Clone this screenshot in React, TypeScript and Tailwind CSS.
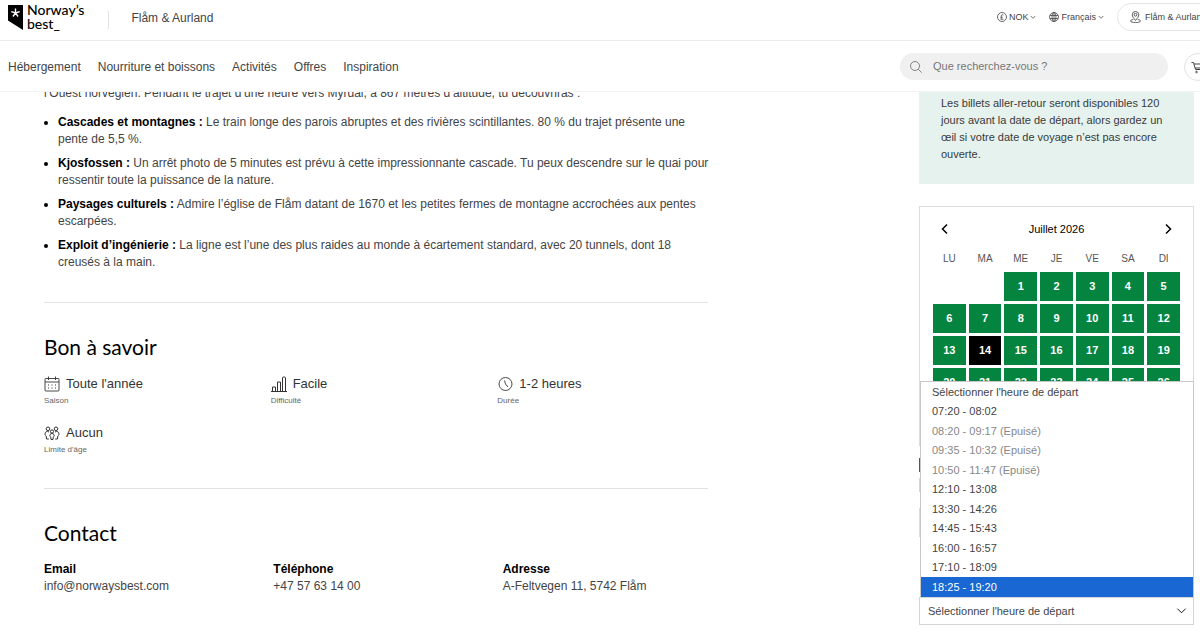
import { useState } from "react";
import type { ReactNode } from "react";

const navLinks = ["Hébergement", "Nourriture et boissons", "Activités", "Offres", "Inspiration"];

const highlights = [
  {
    title: "Cascades et montagnes :",
    text: "Le train longe des parois abruptes et des rivières scintillantes. 80 % du trajet présente une pente de 5,5 %.",
  },
  {
    title: "Kjosfossen :",
    text: "Un arrêt photo de 5 minutes est prévu à cette impressionnante cascade. Tu peux descendre sur le quai pour ressentir toute la puissance de la nature.",
  },
  {
    title: "Paysages culturels :",
    text: "Admire l’église de Flåm datant de 1670 et les petites fermes de montagne accrochées aux pentes escarpées.",
  },
  {
    title: "Exploit d’ingénierie :",
    text: "La ligne est l’une des plus raides au monde à écartement standard, avec 20 tunnels, dont 18 creusés à la main.",
  },
];

const weekdays = ["LU", "MA", "ME", "JE", "VE", "SA", "DI"];

const placeholder = "Sélectionner l'heure de départ";

const departures = [
  { time: "07:20 - 08:02" },
  { time: "08:20 - 09:17", soldOut: true },
  { time: "09:35 - 10:32", soldOut: true },
  { time: "10:50 - 11:47", soldOut: true },
  { time: "12:10 - 13:08" },
  { time: "13:30 - 14:26" },
  { time: "14:45 - 15:43" },
  { time: "16:00 - 16:57" },
  { time: "17:10 - 18:09" },
  { time: "18:25 - 19:20" },
];

const Chevron = ({ className, d }: { className: string; d: string }) => (
  <svg viewBox="0 0 12 12" className={className} fill="none" stroke="currentColor" aria-hidden="true">
    <path d={d} />
  </svg>
);

const down = "M1.5 4 6 8.5 10.5 4";

const Logo = () => (
  <a href="/" className="flex items-start gap-1 text-black">
    <svg viewBox="0 0 15 25" className="mt-[5px] h-[25px] w-[15px]" aria-hidden="true">
      <path d="M0 0h15v25L0 15.500z" />
      <path d="M7.500 3.500v4.500L3.300 6.600M7.500 8l4.200-1.400M7.500 8l-2.600 3.500M7.500 8l2.600 3.500" fill="none" stroke="#fff" strokeWidth="1.400" />
    </svg>
    <span className="pt-[3px] font-[Lato] text-[14px] leading-[14px] font-medium">
      Norway’s
      <br />
      best_
    </span>
  </a>
);

const CurrencyIcon = () => (
  <svg viewBox="0 0 20 20" className="size-[10px]" fill="none" stroke="currentColor" strokeWidth="1.600" aria-hidden="true">
    <circle cx="10" cy="10" r="9" />
    <path d="M13 6.500c-1-2-4.500-1.500-4.500 1.500 0 2 .8 3.500-1 6.500H13M7 10.500h4.500" />
  </svg>
);

const GlobeIcon = () => (
  <svg viewBox="0 0 20 20" className="size-[10px]" fill="none" stroke="currentColor" strokeWidth="1.600" aria-hidden="true">
    <circle cx="10" cy="10" r="9" />
    <ellipse cx="10" cy="10" rx="4" ry="9" />
    <path d="M10 1v18M2 7h16M2 13h16" />
  </svg>
);

const PinIcon = () => (
  <svg viewBox="0 0 22 24" className="h-3 w-[11px]" fill="none" stroke="currentColor" strokeWidth="1.700" aria-hidden="true">
    <path d="M11 19C7 14 4.500 11 4.500 7.500a6.500 6.500 0 0 1 13 0C17.500 11 15 14 11 19z" />
    <circle cx="11" cy="7.500" r="2.800" />
    <path d="M6.500 17C3 17.500 1 18.500 1 20c0 1.800 4.500 3 10 3s10-1.200 10-3c0-1.500-2-2.500-5.500-3" />
  </svg>
);

const SearchIcon = () => (
  <svg viewBox="0 0 12 12" className="size-3 shrink-0" fill="none" stroke="currentColor" strokeWidth="0.900" aria-hidden="true">
    <circle cx="5" cy="5" r="4.500" />
    <path d="m8.200 8.200 3.500 3.500" />
  </svg>
);

const CartIcon = () => (
  <svg viewBox="0 0 14 14" className="size-[14px]" fill="none" stroke="currentColor" aria-hidden="true">
    <path d="M.5 2.500h2l2 7h7.500M3 4h10.500l-1.500 4H4" />
    <circle cx="5.500" cy="12" r="0.800" />
    <circle cx="10.500" cy="12" r="0.800" />
  </svg>
);

const CalendarIcon = () => (
  <svg viewBox="0 0 16 16" className="size-4" fill="none" stroke="currentColor" strokeWidth="0.900" aria-hidden="true">
    <rect x="1" y="2.500" width="14" height="12.500" rx="1" />
    <path d="M1 6h14M4.500.5v3.500M11.500.5v3.500" />
    <path d="M4 9h1M7.500 9h1M11 9h1M4 12h1M7.500 12h1M11 12h1" strokeWidth="1.200" />
  </svg>
);

const BarsIcon = () => (
  <svg viewBox="0 0 16 16" className="size-4" fill="none" stroke="currentColor" aria-hidden="true">
    <path d="M0 15.500h16M1.500 15.500v-4.500h3v4.500M6.500 15.500V6h3v9.500M11.500 15.500V2a1 1 0 0 1 1-1h1a1 1 0 0 1 1 1v13.500" />
  </svg>
);

const GroupIcon = () => (
  <svg viewBox="0 0 16 16" className="size-4" fill="none" stroke="currentColor" aria-hidden="true">
    <circle cx="4" cy="3.800" r="1.800" />
    <circle cx="12" cy="3.800" r="1.800" />
    <circle cx="8" cy="6.500" r="1.600" />
    <path d="M5 7C3 5.800 1 6.800 1 9c0 1.200.8 1.500 1.200 2l.4 3h2.200M11 7c2-1.200 4-.2 4 2 0 1.200-.8 1.500-1.200 2l-.4 3h-2.200" />
    <path d="M6 11.500c-.5-2 .3-3 2-3s2.500 1 2 3l-.8.700-.2 2.300H7l-.2-2.300z" />
  </svg>
);

const ClockIcon = () => (
  <svg viewBox="0 0 16 16" className="size-4" fill="none" stroke="currentColor" strokeWidth="0.900" aria-hidden="true">
    <circle cx="8.500" cy="8" r="6.500" />
    <path d="M7.500 4.500 8.500 8l2.500 3" />
  </svg>
);

const Fact = ({ icon, value, label }: { icon: ReactNode; value: string; label: string }) => (
  <div>
    <dd className="flex items-center gap-[6px] text-[13px] leading-[18px] text-[#333]">
      {icon}
      {value}
    </dd>
    <dt className="mt-[2px] text-[8px] leading-[12px] text-[#666]">{label}</dt>
  </div>
);

const Header = () => (
  <header className="sticky top-0 z-20 bg-white text-[#444]">
    <div className="-mr-7 flex h-[41px] items-center border-b border-[#ececec] pl-2">
      <div className="flex h-full items-start">
        <Logo />
      </div>
      <span className="ml-6 h-[18px] w-px bg-[#e2e2e2]"></span>
      <a href="/flam" className="ml-[22px] pb-1 text-[12px] leading-[18px]">
        Flåm &amp; Aurland
      </a>
      <div className="ml-auto flex items-center pb-[6px] text-[9px] leading-[14px]">
        <button className="flex items-center gap-[2px]">
          <CurrencyIcon />
          NOK
          <Chevron className="size-[6px] stroke-[1.500]" d={down} />
        </button>
        <button className="ml-[13px] flex items-center gap-[2px]">
          <GlobeIcon />
          Français
          <Chevron className="size-[6px] stroke-[1.500]" d={down} />
        </button>
        <button className="ml-[13px] flex h-7 w-[111px] items-center gap-1 rounded-full border border-[#e6e6e6] pl-3 whitespace-nowrap">
          <PinIcon />
          Flåm &amp; Aurland
        </button>
      </div>
    </div>
    <div className="-mr-3 flex h-[51px] items-center border-b border-[#f3f3f3] pt-px pl-2">
      <nav className="flex gap-[17px] text-[12px] leading-[18px]">
        {navLinks.map((link) => (
          <a key={link} href="#">
            {link}
          </a>
        ))}
      </nav>
      <label className="ml-auto flex h-[27px] w-[268px] items-center gap-[11px] rounded-full bg-[#f0f0f0] pl-[10px] text-[#777]">
        <SearchIcon />
        <input
          type="search"
          aria-label="Rechercher"
          placeholder="Que recherchez-vous ?"
          className="min-w-0 flex-1 bg-transparent text-[11px] outline-none placeholder:text-[#777]"
        />
      </label>
      <button aria-label="Panier" className="ml-4 flex size-7 items-center justify-center rounded-full border border-[#e2e2e2]">
        <CartIcon />
      </button>
    </div>
  </header>
);

const BookingCalendar = () => {
  const [day, setDay] = useState(14);

  return (
    <section className="mt-[22px] h-[240px] border border-[#dcdcdc] px-[13px] pt-[13px] text-black">
      <div className="flex h-[18px] items-center justify-between px-[6px] text-[11px] font-medium">
        <button aria-label="Mois précédent">
          <Chevron className="size-3 stroke-[1.500]" d="M8 1.500 3.500 6 8 10.500" />
        </button>
        <h3>Juillet 2026</h3>
        <button aria-label="Mois suivant">
          <Chevron className="size-3 stroke-[1.500]" d="M4 1.500 8.500 6 4 10.500" />
        </button>
      </div>
      <div className="mt-3 grid grid-cols-7 gap-[3px] text-center text-[10px] leading-[18px] text-[#555]">
        {weekdays.map((name) => (
          <span key={name}>{name}</span>
        ))}
      </div>
      <div className="mt-1 grid grid-cols-7 gap-[3px] text-[11px] font-bold text-white">
        {Array.from({ length: 31 }, (_, i) => i + 1).map((n) => (
          <button
            key={n}
            onClick={() => setDay(n)}
            className={`h-[29px] first:col-start-3 ${n === day ? "bg-black" : "bg-[#04843f]"}`}
          >
            {n}
          </button>
        ))}
      </div>
    </section>
  );
};

const DepartureSelect = () => {
  const [selected, setSelected] = useState("");
  const active = "18:25 - 19:20";

  return (
    <div className="relative mt-[60px] text-[11px] text-[#444]">
      <ul
        role="listbox"
        aria-label="Heure de départ"
        className="absolute right-0 bottom-full left-px z-10 flex h-[216px] flex-col border border-b-0 border-[#c8c8c8] bg-white"
      >
        <li role="option" aria-selected="false" className="flex flex-1 items-center pl-[11px]">
          {placeholder}
        </li>
        {departures.map(({ time, soldOut }) => (
          <li
            key={time}
            role="option"
            aria-selected={time === active}
            aria-disabled={soldOut}
            onClick={() => !soldOut && setSelected(time)}
            className={`flex flex-1 items-center pl-[11px] ${
              soldOut ? "text-[#888]" : time === active ? "bg-[#1967d2] text-white" : ""
            }`}
          >
            {soldOut ? `${time} (Epuisé)` : time}
          </li>
        ))}
      </ul>
      <select
        aria-label="Heure de départ"
        value={selected}
        onChange={(e) => setSelected(e.target.value)}
        className="block h-7 w-full appearance-none border border-[#d5d5d5] bg-white pl-2 outline-none"
      >
        <option value="">{placeholder}</option>
        {departures.map(({ time, soldOut }) => (
          <option key={time} value={time} disabled={soldOut}>
            {time}
          </option>
        ))}
      </select>
      <Chevron className="pointer-events-none absolute top-2 right-[7px] size-[11px] text-black" d={down} />
    </div>
  );
};

const App = () => {
  return (
    <div className="overflow-x-clip bg-white font-['Liberation_Sans',sans-serif]">
      <Header />
      <main className="-mt-2 flex items-start justify-between pr-[6px] pl-11">
        <article className="w-[664px] pt-px text-[12px] leading-[17px] text-[#444]">
          <p>l’Ouest norvégien. Pendant le trajet d’une heure vers Myrdal, à 867 mètres d’altitude, tu découvriras :</p>
          <ul className="mt-3 -mr-1 flex list-disc flex-col gap-[7px] pl-[14px] marker:text-black">
            {highlights.map(({ title, text }) => (
              <li key={title}>
                <strong className="font-semibold text-black">{title}</strong> {text}
              </li>
            ))}
          </ul>

          <hr className="mt-[31px] border-[#e2e2e2]" />
          <h2 className="mt-[30px] font-[Lato] text-[21px] leading-[28px] text-black">Bon à savoir</h2>
          <dl className="mt-[14px] grid grid-cols-3 gap-x-4 gap-y-[17px]">
            <Fact icon={<CalendarIcon />} value="Toute l'année" label="Saison" />
            <Fact icon={<BarsIcon />} value="Facile" label="Difficulté" />
            <Fact icon={<ClockIcon />} value="1-2 heures" label="Durée" />
            <Fact icon={<GroupIcon />} value="Aucun" label="Limite d'âge" />
          </dl>

          <hr className="mt-8 border-[#e2e2e2]" />
          <h2 className="mt-[30px] font-[Lato] text-[21px] leading-[28px] text-black">Contact</h2>
          <dl className="mt-[14px] grid grid-cols-3 gap-x-6">
            <div>
              <dt className="font-semibold text-black">Email</dt>
              <dd>
                <a href="mailto:info@norwaysbest.com">info@norwaysbest.com</a>
              </dd>
            </div>
            <div>
              <dt className="font-semibold text-black">Téléphone</dt>
              <dd>
                <a href="tel:+4757631400">+47 57 63 14 00</a>
              </dd>
            </div>
            <div>
              <dt className="font-semibold text-black">Adresse</dt>
              <dd>A-Feltvegen 11, 5742 Flåm</dd>
            </div>
          </dl>
        </article>

        <aside className="w-[275px]">
          <p className="bg-[#e5f2ee] px-[22px] pt-[11px] pb-[21px] text-[11px] leading-[17px] text-[#3a3a3a]">
            Les billets aller-retour seront disponibles 120 jours avant la date de départ, alors gardez un œil si votre
            date de voyage n’est pas encore ouverte.
          </p>
          <BookingCalendar />
          {/* availability legend */}
          <div className="mt-3 h-[14px] w-[14px] bg-[#04843f]"></div>
          <div className="mt-[6px] h-[14px] w-[14px] bg-[#f5c6cb]"></div>
          <div className="mt-4 h-[29px] border border-[#dcdcdc]"></div>
          <DepartureSelect />
        </aside>
      </main>
    </div>
  );
};

export default App;
